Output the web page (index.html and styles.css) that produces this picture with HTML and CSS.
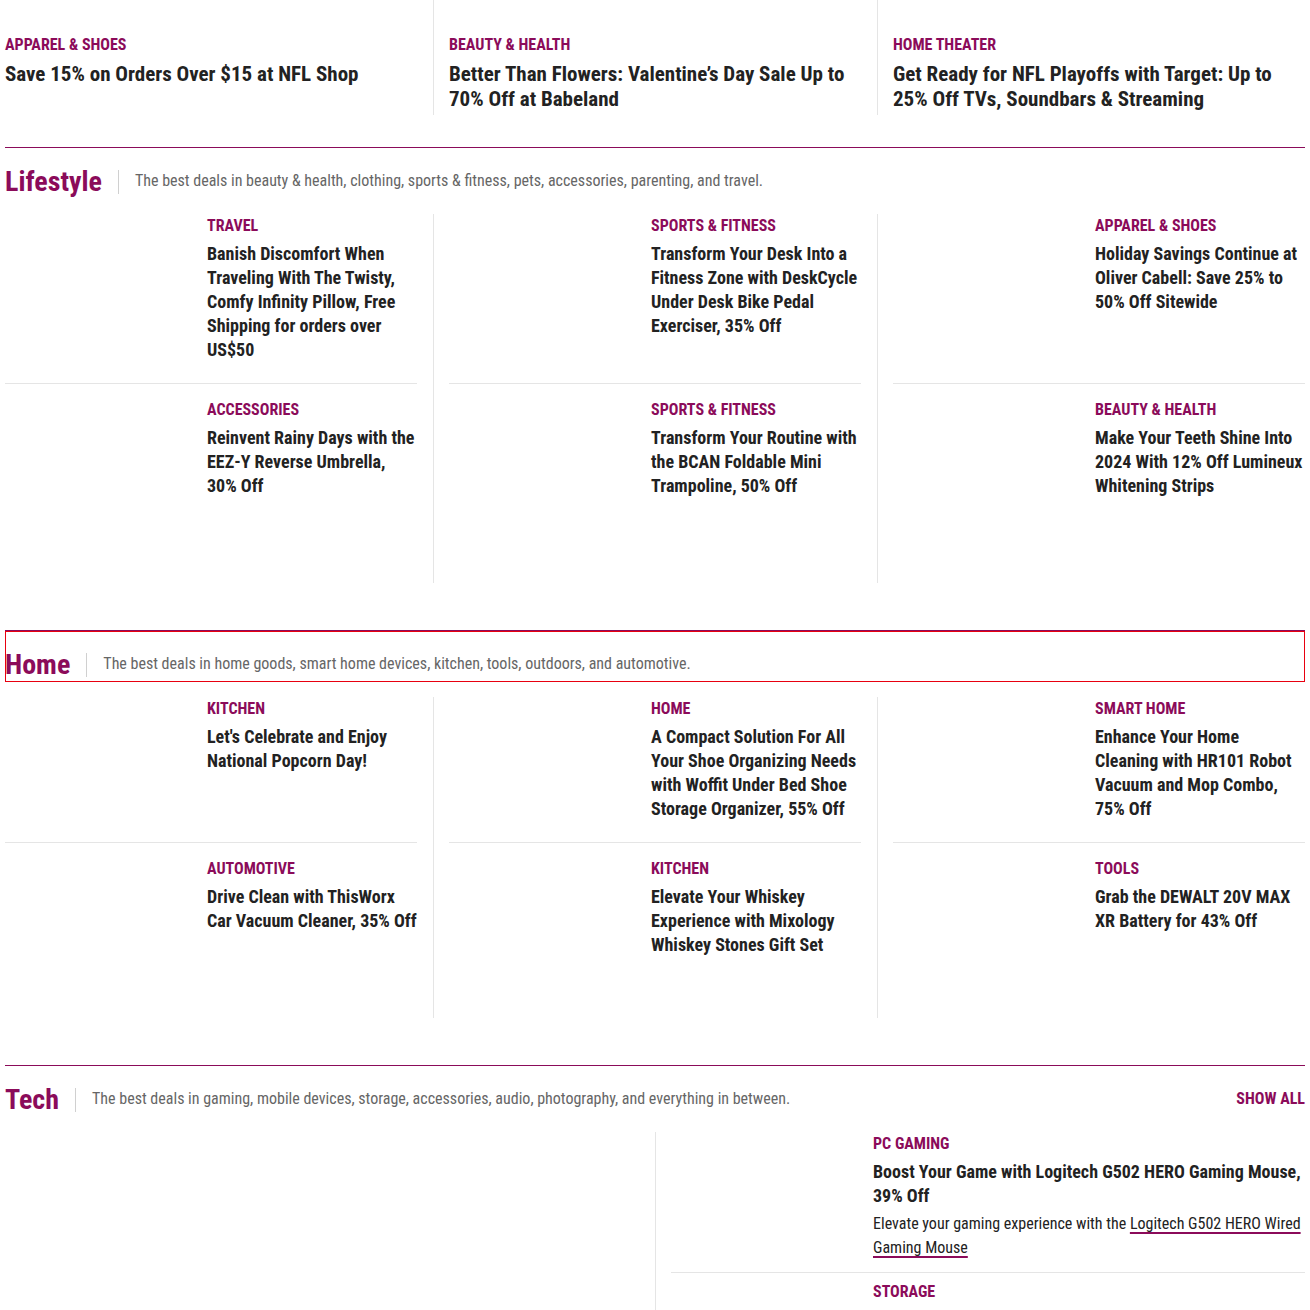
FILE: index.html
```html
<!DOCTYPE html>
<html lang="en">
<head>
<meta charset="utf-8">
<title>Deals</title>
<link rel="stylesheet" href="styles.css">
</head>
<body>
<div class="page">

  <div class="grid3 top-row">
    <article class="plain-card">
      <div class="cat">Apparel &amp; Shoes</div>
      <h3 class="title-lg">Save 15% on Orders Over $15 at NFL Shop</h3>
    </article>
    <article class="plain-card">
      <div class="cat">Beauty &amp; Health</div>
      <h3 class="title-lg">Better Than Flowers: Valentine’s Day Sale Up to 70% Off at Babeland</h3>
    </article>
    <article class="plain-card">
      <div class="cat">Home Theater</div>
      <h3 class="title-lg">Get Ready for NFL Playoffs with Target: Up to 25% Off TVs, Soundbars &amp; Streaming</h3>
    </article>
    <div class="vsep vsep-a"></div>
    <div class="vsep vsep-b"></div>
  </div>

  <section class="section">
    <header class="sec-head">
      <h2 class="sec-title">Lifestyle</h2>
      <p class="sec-desc">The best deals in beauty &amp; health, clothing, sports &amp; fitness, pets, accessories, parenting, and travel.</p>
    </header>
    <div class="grid3 deals lifestyle">
      <article class="card first"><div class="thumb"></div><div class="body"><div class="cat">Travel</div><h3 class="title">Banish Discomfort When Traveling With The Twisty, Comfy Infinity Pillow, Free Shipping for orders over US$50</h3></div></article>
      <article class="card first"><div class="thumb"></div><div class="body"><div class="cat">Sports &amp; Fitness</div><h3 class="title">Transform Your Desk Into a Fitness Zone with DeskCycle Under Desk Bike Pedal Exerciser, 35% Off</h3></div></article>
      <article class="card first"><div class="thumb"></div><div class="body"><div class="cat">Apparel &amp; Shoes</div><h3 class="title">Holiday Savings Continue at Oliver Cabell: Save 25% to 50% Off Sitewide</h3></div></article>
      <article class="card second"><div class="thumb"></div><div class="body"><div class="cat">Accessories</div><h3 class="title">Reinvent Rainy Days with the EEZ-Y Reverse Umbrella, 30% Off</h3></div></article>
      <article class="card second"><div class="thumb"></div><div class="body"><div class="cat">Sports &amp; Fitness</div><h3 class="title">Transform Your Routine with the BCAN Foldable Mini Trampoline, 50% Off</h3></div></article>
      <article class="card second"><div class="thumb"></div><div class="body"><div class="cat">Beauty &amp; Health</div><h3 class="title">Make Your Teeth Shine Into 2024 With 12% Off Lumineux Whitening Strips</h3></div></article>
      <div class="vsep vsep-a span2"></div>
      <div class="vsep vsep-b span2"></div>
    </div>
  </section>

  <section class="section">
    <header class="sec-head focused">
      <h2 class="sec-title">Home</h2>
      <p class="sec-desc">The best deals in home goods, smart home devices, kitchen, tools, outdoors, and automotive.</p>
    </header>
    <div class="grid3 deals home">
      <article class="card first"><div class="thumb"></div><div class="body"><div class="cat">Kitchen</div><h3 class="title">Let's Celebrate and Enjoy National Popcorn Day!</h3></div></article>
      <article class="card first"><div class="thumb"></div><div class="body"><div class="cat">Home</div><h3 class="title">A Compact Solution For All Your Shoe Organizing Needs with Woffit Under Bed Shoe Storage Organizer, 55% Off</h3></div></article>
      <article class="card first"><div class="thumb"></div><div class="body"><div class="cat">Smart Home</div><h3 class="title">Enhance Your Home Cleaning with HR101 Robot Vacuum and Mop Combo, 75% Off</h3></div></article>
      <article class="card second"><div class="thumb"></div><div class="body"><div class="cat">Automotive</div><h3 class="title">Drive Clean with ThisWorx Car Vacuum Cleaner, 35% Off</h3></div></article>
      <article class="card second"><div class="thumb"></div><div class="body"><div class="cat">Kitchen</div><h3 class="title">Elevate Your Whiskey Experience with Mixology Whiskey Stones Gift Set</h3></div></article>
      <article class="card second"><div class="thumb"></div><div class="body"><div class="cat">Tools</div><h3 class="title">Grab the DEWALT 20V MAX XR Battery for 43% Off</h3></div></article>
      <div class="vsep vsep-a span2"></div>
      <div class="vsep vsep-b span2"></div>
    </div>
  </section>

  <section class="section">
    <header class="sec-head">
      <h2 class="sec-title">Tech</h2>
      <p class="sec-desc">The best deals in gaming, mobile devices, storage, accessories, audio, photography, and everything in between.</p>
      <a class="show-all" href="#">Show All</a>
    </header>
    <div class="grid2">
      <div class="feature"></div>
      <div class="vsep"></div>
      <div class="tech-list">
        <article class="card tech first"><div class="thumb"></div><div class="body"><div class="cat">PC Gaming</div><h3 class="title">Boost Your Game with Logitech G502 HERO Gaming Mouse, 39% Off</h3><p class="excerpt">Elevate your gaming experience with the <a href="#">Logitech G502 HERO Wired Gaming Mouse</a></p></div></article>
        <article class="card tech second"><div class="thumb"></div><div class="body"><div class="cat">Storage</div></div></article>
      </div>
    </div>
  </section>

</div>
</body>
</html>
```

FILE: styles.css
```css
* { box-sizing: border-box; }
html, body { margin: 0; padding: 0; background: #fff; }
body {
  font-family: "Roboto Condensed", "Roboto", "Liberation Sans Narrow", sans-serif;
  font-stretch: 75%;
  color: #222;
  overflow: hidden;
}
.page { padding: 0 5px; width: 1310px; }
h2, h3, p { margin: 0; }

.cat {
  color: #8b0b5a;
  font-size: 16px;
  font-weight: 700;
  line-height: 24px;
  text-transform: uppercase;
}
.title-lg {
  font-size: 21px;
  font-weight: 700;
  line-height: 25px;
  margin-top: 5px;
  color: #222;
}
.title {
  font-size: 18px;
  font-weight: 700;
  line-height: 24px;
  margin-top: 4px;
  color: #222;
}

.grid3 {
  display: grid;
  grid-template-columns: 412px 32px 412px 32px 412px;
}
.vsep { background: #e5e5e5; width: 1px; justify-self: start; margin-left: 16px; }
.vsep-a { grid-column: 2; grid-row: 1; }
.vsep-b { grid-column: 4; grid-row: 1; }
.vsep.span2 { grid-row: 1 / span 2; }

.top-row { height: 115px; margin-bottom: 32px; }
.plain-card { padding-top: 33px; grid-row: 1; }

.section { margin-bottom: 47px; }
.sec-head {
  display: flex;
  align-items: center;
  border-top: 1px solid #8b0b5a;
  padding-top: 17px;
  height: 52px;
  margin-bottom: 15px;
}
.sec-head.focused { box-shadow: inset 0 0 0 1px #e8000f; }
.sec-title {
  color: #8b0b5a;
  font-size: 28px;
  font-weight: 700;
  line-height: 34px;
  padding-right: 16px;
  border-right: 1px solid #d0d0d0;
  height: 24px;
  display: flex;
  align-items: center;
}
.sec-desc {
  color: #666;
  font-size: 16px;
  line-height: 22px;
  padding-left: 16px;
  padding-bottom: 2px;
  flex: 1;
}
.show-all {
  color: #8b0b5a;
  font-size: 16px;
  font-weight: 700;
  line-height: 22px;
  padding-bottom: 2px;
  text-transform: uppercase;
  text-decoration: none;
}

.card { display: flex; gap: 16px; }
.thumb { width: 186px; flex: none; }
.body { flex: 1; min-width: 0; }
.card.first { border-bottom: 1px solid #e5e5e5; padding-bottom: 21px; }
.card.second { padding-top: 14px; }

.deals.lifestyle { grid-template-rows: auto 199px; }
.deals.home { grid-template-rows: auto 175px; }

.grid2 {
  display: grid;
  grid-template-columns: 634px 32px 634px;
  height: 180px;
}
.card.tech.first { padding-bottom: 12px; }
.card.tech.second { padding-top: 7px; }
.excerpt {
  font-size: 16px;
  line-height: 24px;
  margin-top: 4px;
  color: #222;
}
.excerpt a {
  color: #222;
  text-decoration: underline;
  text-decoration-color: #8b0b5a;
  text-decoration-thickness: 2px;
  text-underline-offset: 3px;
}
```
